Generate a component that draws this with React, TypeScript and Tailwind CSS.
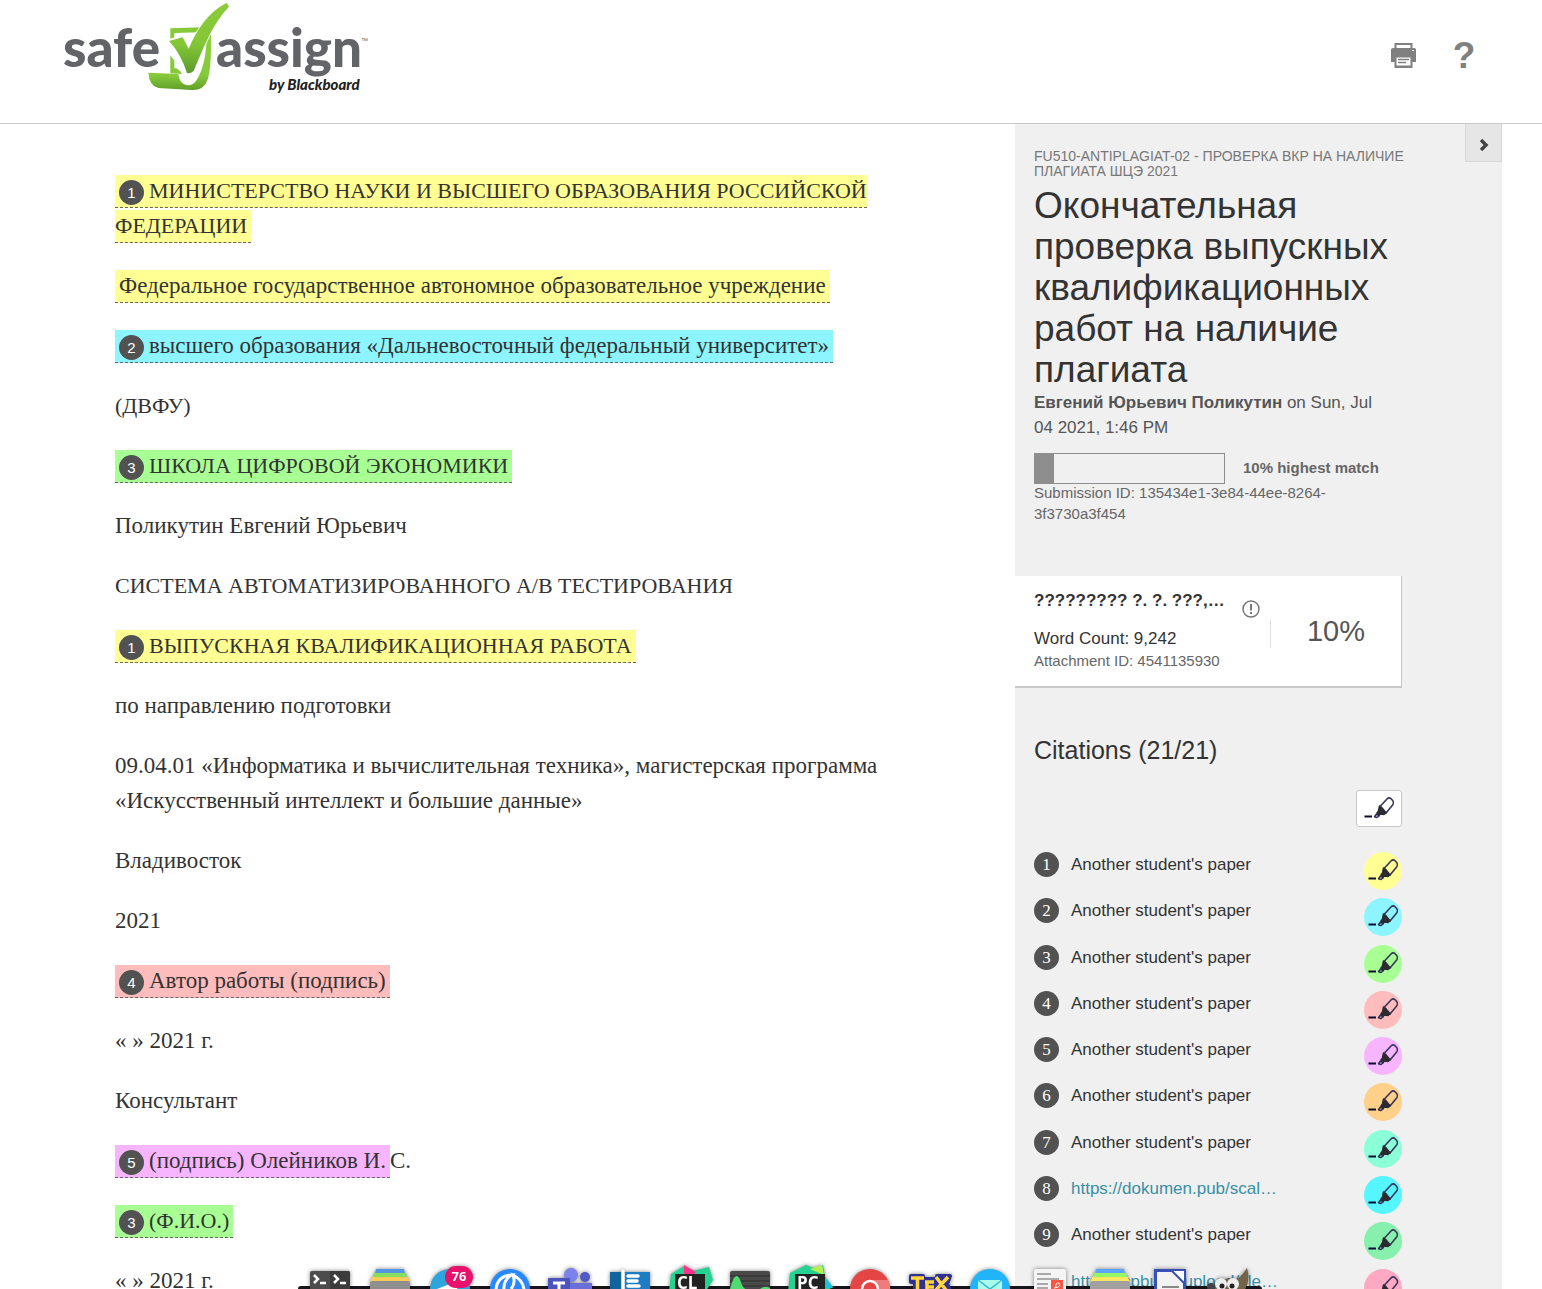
import type { ReactNode } from 'react';

const sans = "font-['Liberation_Sans',Arial,sans-serif]";
const serif = "font-['Liberation_Serif',Georgia,serif]";

const colors = {
  yellow: 'bg-[#ffff94]',
  cyan: 'bg-[#8cf5ff]',
  green: 'bg-[#a8ff94]',
  red: 'bg-[#ffbcbc]',
  pink: 'bg-[#f8b5ff]',
};

function Badge({ n }: { n: number }) {
  return (
    <span className={`mr-[5px] inline-flex size-[25px] items-center justify-center rounded-full bg-[#525252] align-middle text-[15px] leading-none text-white ${sans}`}>
      {n}
    </span>
  );
}

function Mark({ color, n, children }: { color: keyof typeof colors; n?: number; children: ReactNode }) {
  return (
    <span className={`border-b border-dashed border-[#666] px-1 pt-[3px] pb-1 ${colors[color]}`}>
      {n !== undefined && <Badge n={n} />}
      {children}
    </span>
  );
}

function Marker() {
  return (
    <svg viewBox="0 0 38 38" className="size-[38px]" aria-hidden="true">
      <path d="M4.500 26.500h7.500" stroke="#0c0c34" strokeWidth="2" />
      <path d="M20.500 16 27 9q2-2 4-.3l1.700 1.800q1.500 2 .3 4L31 17l-5 6Z" fill="none" stroke="#36365a" strokeWidth="1.600" strokeLinejoin="round" />
      <path d="m19.500 16 6.500 7-2 1.500-3.500-.5-1.500 1.500-2-2.500 1.500-2Z" fill="#2b2b30" stroke="#2b2b30" strokeWidth="1.500" strokeLinejoin="round" />
      <path d="m16.500 24 2.500 2-2 1.500-2.500-.8Z" fill="none" stroke="#2b2b50" strokeWidth="1.500" strokeLinejoin="round" />
    </svg>
  );
}

const citations = [
  { label: "Another student's paper", color: 'bg-[#ffff94]' },
  { label: "Another student's paper", color: 'bg-[#8cf5ff]' },
  { label: "Another student's paper", color: 'bg-[#a8ff94]' },
  { label: "Another student's paper", color: 'bg-[#ffbcbc]' },
  { label: "Another student's paper", color: 'bg-[#f8b5ff]' },
  { label: "Another student's paper", color: 'bg-[#ffd08a]' },
  { label: "Another student's paper", color: 'bg-[#8affd8]' },
  { label: 'https://dokumen.pub/scal…', color: 'bg-[#55f6ff]', link: true },
  { label: "Another student's paper", color: 'bg-[#86f0ac]' },
  { label: 'https://spbu.ru/upload/file…', color: 'bg-[#ffa8c4]', link: true },
];

function Logo() {
  return (
    <svg viewBox="0 0 320 100" className="h-[100px] w-[320px]" role="img" aria-label="SafeAssign by Blackboard">
      <defs>
        <linearGradient id="leaf" x1="0" y1="0" x2="0" y2="1">
          <stop offset="0" stopColor="#8ccb3a" />
          <stop offset="0.6" stopColor="#82c636" />
          <stop offset="1" stopColor="#5c9a2c" />
        </linearGradient>
        <linearGradient id="scroll" x1="0" y1="0" x2="0" y2="1">
          <stop offset="0" stopColor="#8ed13c" />
          <stop offset="0.75" stopColor="#86c93a" />
          <stop offset="1" stopColor="#5f9f2a" />
        </linearGradient>
      </defs>
      <g fill="#636467" fontFamily="Lato, sans-serif" fontWeight="900" fontSize="53">
        <text x="12" y="67">safe</text>
        <text x="165" y="67">assign</text>
      </g>
      <text x="310" y="43" fontFamily="Liberation Sans, sans-serif" fontSize="7" fill="#636467">™</text>
      <g transform="translate(-1 0) scale(0.3333)">
        <path d="M361 85 458 82 448 97 373 99V112L361 116Z" fill="#86c93a" />
        <path d="M361 166 373 182V204Q388 206 396 222L361 220Z" fill="#86c93a" />
        <path d="M295 218 385 222Q388 252 412 256 430 257 440 240 466 200 470 118L483 98Q485 190 475 232 464 273 425 270L325 264Q298 258 295 218Z" fill="url(#scroll)" />
        <path d="M357 123 398 112 416 146C440 90 474 36 530 8L537 20C488 70 462 140 431 213Q420 222 411 219 392 160 357 123Z" fill="url(#leaf)" stroke="#fff" strokeWidth="5" paintOrder="stroke" />
      </g>
      <text x="218" y="90" fontFamily="Lato, sans-serif" fontStyle="italic" fontWeight="900" fontSize="15" fill="#222">by Blackboard</text>
    </svg>
  );
}

function PrinterIcon() {
  return (
    <svg viewBox="0 0 25 25" className="h-[25px] w-[25px]" aria-hidden="true">
      <path d="M3.500 0h18v6h-18Z" fill="#808080" />
      <path d="M5.500 2h14v3.500h-14Z" fill="#fff" />
      <path d="M0 7q0-2 2-2h21q2 0 2 2v12h-4v-5H4v5H0Z" fill="#808080" />
      <path d="M0 6h25v13H0ZM3.500 13h18v12h-18Z" fill="#808080" />
      <path d="M5.500 14.500h14v8h-14Z" fill="#fff" />
      <path d="M7 16.500h11M7 19.500h8" stroke="#808080" strokeWidth="1.300" />
      <path d="M21 7.500h2" stroke="#fff" />
    </svg>
  );
}

function DockApp({ children }: { children: ReactNode }) {
  return (
    <button type="button" className="h-[30px] w-[60px]">
      <svg viewBox="0 0 60 30" className="h-[30px] w-[60px] drop-shadow-[0_0_2px_rgba(0,0,0,0.5)]" aria-hidden="true">
        {children}
      </svg>
    </button>
  );
}

const dockFont = { fontFamily: 'Open Sans, sans-serif', fontWeight: 700 } as const;

function Dock() {
  return (
    <nav aria-label="Dock" className="absolute inset-x-0 bottom-0 flex justify-center pl-[18px]">
      <div className="relative flex px-[2px]">
        <div className="absolute inset-x-0 bottom-0 h-[3px] rounded-t bg-[#15151b]" />
        <div className="relative flex">
          <DockApp>
            <rect x="10" y="12" width="40" height="20" rx="2" fill="#4c4c4c" />
            <path d="M30 12h18q2 0 2 2v18H30Z" fill="#3c3c3c" />
            <path d="m14 16 4 4-4 4M20 24h6M34 16l4 4-4 4M40 24h6" fill="none" stroke="#fff" strokeWidth="2.500" />
          </DockApp>
          <DockApp>
            <path d="M16 10h28l1 5H15Z" fill="#5494e4" />
            <path d="M14 14h32l1 5H13Z" fill="#86df5c" />
            <path d="M12 18h36l2 6H10Z" fill="#ffcb55" />
            <rect x="10" y="22" width="40" height="10" rx="2" fill="#8e8e8e" />
          </DockApp>
          <DockApp>
            <circle cx="30" cy="30" r="20" fill="#2ea4dc" />
            <path d="m17 30 23-9-3 9Z" fill="#fff" />
            <rect x="25" y="7" width="28" height="22" rx="11" fill="#e8116c" />
            <text x="39" y="22" fontSize="13" fill="#fff" textAnchor="middle" style={dockFont}>76</text>
          </DockApp>
          <DockApp>
            <circle cx="30" cy="30" r="20" fill="#2689ff" />
            <path d="M16 31q1-14 15-15-8 6-7 15M31 30q5-6 2-14 9 4 11 14" fill="none" stroke="#fff" strokeWidth="3" />
          </DockApp>
          <DockApp>
            <circle cx="31" cy="16" r="7" fill="#7b83eb" />
            <circle cx="45" cy="18" r="5" fill="#5059c9" />
            <path d="M24 24h28v8H24Z" fill="#6870d8" />
            <rect x="8" y="19" width="22" height="13" rx="1" fill="#4b53bc" />
            <path d="M13 24h12M19 24v8" stroke="#fff" strokeWidth="3" />
          </DockApp>
          <DockApp>
            <rect x="10" y="13" width="40" height="20" fill="#1c7cc4" />
            <rect x="10" y="13" width="12" height="20" fill="#13649e" />
            <path d="M23 12v18M28 17h10M28 22h9M28 27h11" stroke="#fff" strokeWidth="3.500" strokeLinecap="round" />
          </DockApp>
          <DockApp>
            <path d="m11 15 13-8 9 5 16-4 4 13-7 11H9Z" fill="#24d391" />
            <path d="m24 6 12 7-4 5h-8Z" fill="#ff318c" />
            <rect x="15" y="15" width="30" height="17" fill="#222" />
            <text x="17" y="30" fontSize="17" fill="#fff" style={dockFont}>CL</text>
          </DockApp>
          <DockApp>
            <rect x="10" y="12" width="40" height="20" rx="2" fill="#494949" />
            <path d="M10 17h40M10 22h40M10 27h40" stroke="#3a3a3a" strokeWidth="2" />
            <path d="M10 30q6-24 12-4 3 6 8 4M40 30q5-4 10-1v3H40Z" fill="#4edb72" />
          </DockApp>
          <DockApp>
            <path d="m10 14 16-8 10 4 7-4 2 12 8 10-7 4H8Z" fill="#24d391" />
            <path d="m30 10 12-4 2 10Z" fill="#b8ee50" />
            <path d="m45 18 8 11H45Z" fill="#16c4e0" />
            <rect x="15" y="15" width="30" height="17" fill="#222" />
            <text x="17" y="30" fontSize="17" fill="#fff" style={dockFont}>PC</text>
          </DockApp>
          <DockApp>
            <circle cx="30" cy="30" r="20" fill="#e54545" />
            <path d="M30 21h18q3 5 2 11H30Z" fill="#ef7b7b" />
            <circle cx="30" cy="30" r="8" fill="#e54545" stroke="#fff" strokeWidth="2.500" />
          </DockApp>
          <DockApp>
            <path d="M11 17h12v3h14v-3h13l-3 8 2 4H15v-6h-4Z" fill="#2f3192" stroke="#2f3192" strokeWidth="4" strokeLinejoin="round" />
            <path d="M11 19h13M17.500 19v12M25 23h9M27 23v9M27 28h7M36 18l10 13M48 18 36 31" stroke="#ffd43c" strokeWidth="3.500" />
          </DockApp>
          <DockApp>
            <circle cx="30" cy="30" r="20" fill="#22b4f8" />
            <path d="M18 21h24v11H18Z" fill="#a8ffec" />
            <path d="m18 21 12 9 12-9" fill="none" stroke="#32b8c8" strokeWidth="1.500" />
          </DockApp>
          <DockApp>
            <rect x="14" y="10" width="32" height="22" rx="2" fill="#f4f4f4" />
            <path d="M17 15h14M17 20h22M17 25h11M17 29h11" stroke="#aaa" strokeWidth="2" />
            <rect x="31" y="21" width="12" height="11" fill="#f75642" />
            <path d="M34 29q8-1 5-5-4-1-3 5" fill="none" stroke="#fff" />
          </DockApp>
          <DockApp>
            <path d="M16 10h28l1 5H15Z" fill="#5ca5ff" />
            <path d="M14 14h32l1 5H13Z" fill="#95f767" />
            <path d="M12 18h36l2 6H10Z" fill="#ffe75f" />
            <rect x="10" y="22" width="40" height="10" rx="2" fill="#a0a0a0" />
          </DockApp>
          <DockApp>
            <path d="M15.500 11.500h29V32h-29Z" fill="#f2f2f2" stroke="#3850b4" strokeWidth="3" />
            <path d="M31 11h14v14Z" fill="#fff" stroke="#3850b4" strokeWidth="2" />
            <path d="M22 28h17" stroke="#888" strokeWidth="2" />
          </DockApp>
          <DockApp>
            <path d="M15 32q-2-9 6-11 9-3 14 0 5-1 12-12 4 13-3 23Z" fill="#736549" />
            <circle cx="11" cy="28" r="4" fill="#444" />
            <circle cx="21" cy="25" r="6" fill="#eee" />
            <circle cx="33" cy="25" r="6" fill="#eee" />
            <circle cx="22" cy="27" r="2.500" fill="#222" />
            <circle cx="32" cy="27" r="2.500" fill="#222" />
          </DockApp>
        </div>
      </div>
    </nav>
  );
}

export default function App() {
  return (
    <div className={`relative flex h-screen flex-col overflow-hidden bg-white text-[#333] ${sans}`}>
      <header className="flex h-[124px] shrink-0 items-start justify-between border-b border-[#c8c8c8] pr-[66px] pl-[51px]">
        <Logo />
        <div className="flex items-center gap-[36px] pt-[37px]">
          <button type="button" aria-label="Print"><PrinterIcon /></button>
          <button type="button" aria-label="Help" className="w-[24px] text-[37px] leading-[37px] font-bold text-[#808080]">?</button>
        </div>
      </header>

      <div className="flex min-h-0 flex-1 pr-10">
        <main className={`flex min-w-0 flex-1 flex-col gap-[25px] pt-[49px] pr-[100px] pl-[115px] text-[23px] leading-[35px] ${serif}`}>
          <p className="text-[22px]"><Mark color="yellow" n={1}>МИНИСТЕРСТВО НАУКИ И ВЫСШЕГО ОБРАЗОВАНИЯ РОССИЙСКОЙ ФЕДЕРАЦИИ</Mark></p>
          <p><Mark color="yellow">Федеральное государственное автономное образовательное учреждение</Mark></p>
          <p><Mark color="cyan" n={2}>высшего образования «Дальневосточный федеральный университет»</Mark></p>
          <p className="text-[22px]">(ДВФУ)</p>
          <p className="text-[22px]"><Mark color="green" n={3}>ШКОЛА ЦИФРОВОЙ ЭКОНОМИКИ</Mark></p>
          <p>Поликутин Евгений Юрьевич</p>
          <p className="text-[22px]">СИСТЕМА АВТОМАТИЗИРОВАННОГО А/В ТЕСТИРОВАНИЯ</p>
          <p className="text-[22px]"><Mark color="yellow" n={1}>ВЫПУСКНАЯ КВАЛИФИКАЦИОННАЯ РАБОТА</Mark></p>
          <p>по направлению подготовки</p>
          <p>09.04.01 «Информатика и вычислительная техника», магистерская программа «Искусственный интеллект и большие данные»</p>
          <p>Владивосток</p>
          <p>2021</p>
          <p><Mark color="red" n={4}>Автор работы (подпись)</Mark></p>
          <p>« » 2021 г.</p>
          <p>Консультант</p>
          <p><Mark color="pink" n={5}>(подпись) Олейников И.</Mark>С.</p>
          <p className="text-[22px]"><Mark color="green" n={3}>(Ф.И.О.)</Mark></p>
          <p>« » 2021 г.</p>
        </main>

        <aside className="relative w-[487px] shrink-0 bg-[#f0f0f0] pr-[100px]">
          <button type="button" aria-label="Collapse panel" className="absolute top-0 right-0 flex h-[38px] w-[37px] items-center justify-center border border-t-0 border-[#d8d8d8] bg-[#e6e6e6]">
            <svg viewBox="0 0 10 12" className="mt-1 h-3 w-[10px]" aria-hidden="true">
              <path d="m2 1 5 5-5 5" fill="none" stroke="#444" strokeWidth="3.500" />
            </svg>
          </button>
          <div className="pt-[25px] pl-[19px]">
            <p className="-mr-2 text-[14px] leading-[15px] text-[#777]">FU510-ANTIPLAGIAT-02 - ПРОВЕРКА ВКР НА НАЛИЧИЕ ПЛАГИАТА ШЦЭ 2021</p>
            <h1 className="mt-[6px] text-[37px] leading-[41px]">Окончательная проверка выпускных квалификационных работ на наличие плагиата</h1>
            <p className="pr-4 text-[17px] leading-[25px] text-[#555]"><strong>Евгений Юрьевич Поликутин</strong> on Sun, Jul 04 2021, 1:46 PM</p>
            <div className="mt-[13px] flex items-center gap-[18px]">
              <div className="h-[31px] w-[191px] border border-[#8e8e8e]">
                <div className="h-full w-[10%] bg-[#8e8e8e]" />
              </div>
              <strong className="text-[15px] text-[#666]">10% highest match</strong>
            </div>
            <p className="-mt-0.5 text-[15px] leading-[21px] text-[#666]">Submission ID: 135434e1-3e84-44ee-8264-3f3730a3f454</p>
          </div>

          <section className="mt-[52px] flex h-[112px] items-center border-r border-b-2 border-[#c8c8c8] bg-white pl-[19px]">
            <div className="w-[236px] pb-1">
              <div className="flex items-start gap-[13px]">
                <h2 className="w-[195px] text-[17px] leading-[25px] font-bold whitespace-nowrap">????????? ?. ?. ???,…</h2>
                <svg viewBox="0 0 18 18" className="mt-3 size-[18px] shrink-0" aria-hidden="true">
                  <circle cx="9" cy="9" r="8" fill="none" stroke="#777" strokeWidth="1.500" />
                  <path d="M9 4v6.500M9 12v2" stroke="#777" strokeWidth="2" />
                </svg>
              </div>
              <p className="mt-2 text-[17px] leading-[25px]">Word Count: 9,242</p>
              <p className="text-[15px] leading-[20px] text-[#666]">Attachment ID: 4541135930</p>
            </div>
            <div className="mt-[5px] h-[28px] border-l border-[#ddd]" />
            <div className="flex-1 pt-0.5 text-center text-[29px] text-[#555]">10%</div>
          </section>

          <section className="pl-[19px]">
            <h2 className="mt-[47px] text-[25px] leading-[30px]">Citations (21/21)</h2>
            <div className="mt-[25px] flex justify-end">
              <button type="button" aria-label="Toggle all highlights" className="flex h-[37px] w-[46px] items-center justify-center rounded-[3px] border border-[#c8c8c8] bg-white"><Marker /></button>
            </div>
            <ol className="mt-[25px] grid h-[463px] auto-rows-fr">
              {citations.map((c, i) => (
                <li key={i} className="flex items-start">
                  <span className={`flex size-[25px] items-center justify-center rounded-full bg-[#525252] text-[17px] leading-none text-white ${serif}`}>{i + 1}</span>
                  <span className="ml-[12px] flex-1 text-[17px] leading-[25px]">
                    {c.link ? <a href="#source" className="text-[#3a8fa5]">{c.label}</a> : c.label}
                  </span>
                  <button type="button" aria-label={`Toggle highlight ${i + 1}`} className={`size-[38px] rounded-full ${c.color}`}><Marker /></button>
                </li>
              ))}
            </ol>
          </section>
        </aside>
      </div>
      <Dock />
    </div>
  );
}
